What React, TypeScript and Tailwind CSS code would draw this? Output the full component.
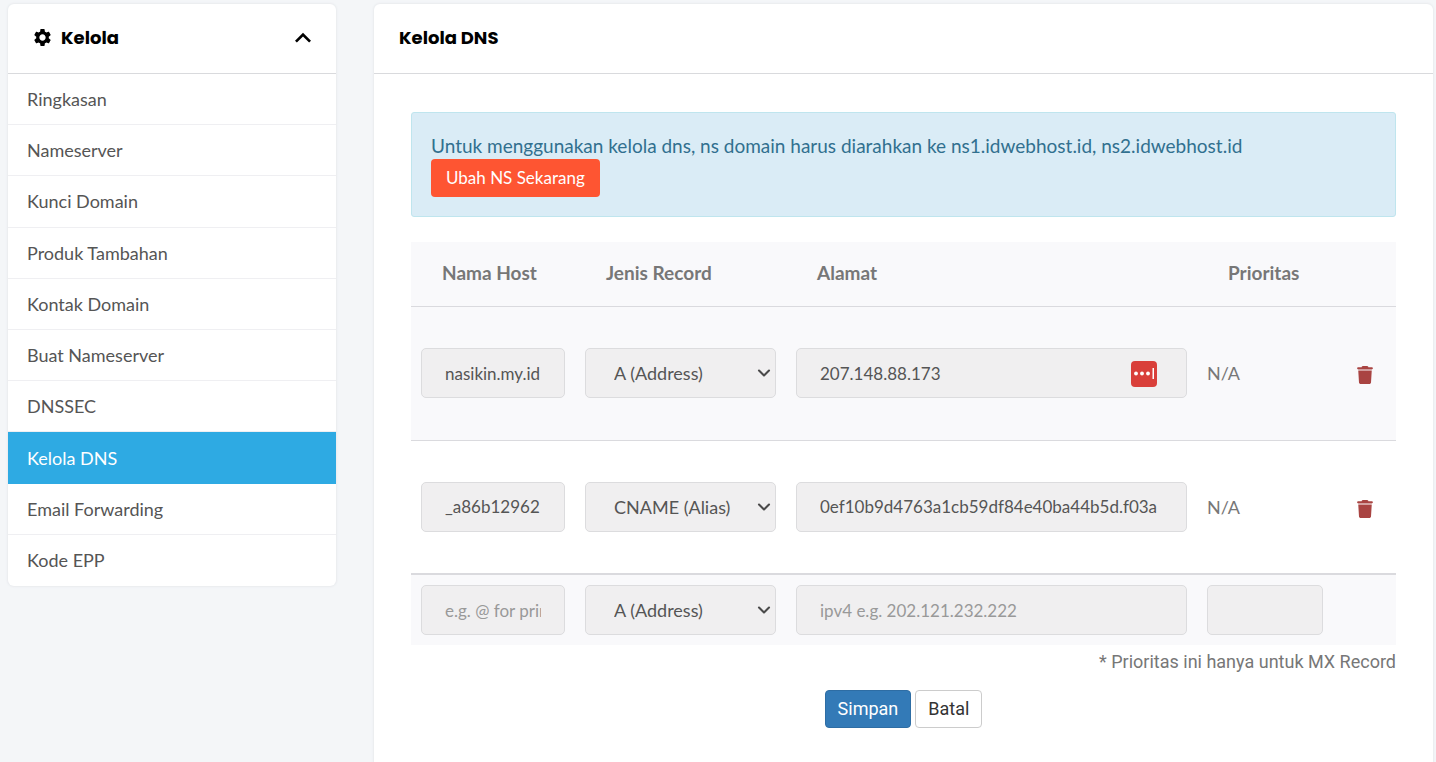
import { ChevronDown } from 'lucide-react';
import { FaTrash } from 'react-icons/fa6';
import { MdExpandLess, MdSettings } from 'react-icons/md';

type MenuItem = {
  label: string;
  active?: boolean;
};

type DnsRecord = {
  id: number;
  host: string;
  type: string;
  address: string;
  hasManager?: boolean;
};

const menuItems: MenuItem[] = [
  { label: 'Ringkasan' },
  { label: 'Nameserver' },
  { label: 'Kunci Domain' },
  { label: 'Produk Tambahan' },
  { label: 'Kontak Domain' },
  { label: 'Buat Nameserver' },
  { label: 'DNSSEC' },
  { label: 'Kelola DNS', active: true },
  { label: 'Email Forwarding' },
  { label: 'Kode EPP' },
];

const records: DnsRecord[] = [
  { id: 1, host: 'nasikin.my.id', type: 'A', address: '207.148.88.173', hasManager: true },
  {
    id: 2,
    host: '_a86b12962',
    type: 'CNAME',
    address: '0ef10b9d4763a1cb59df84e40ba44b5d.f03a',
  },
];

const fieldClass =
  'block h-[50px] w-full rounded-[5px] border border-[#dcdcde] bg-[#f0eff0] text-[#555] placeholder:text-[#999]';

const inputClass = `${fieldClass} px-[23px] text-[17px]`;

function Sidebar() {
  return (
    <aside className="w-82 shrink-0 self-start overflow-hidden rounded-md bg-white shadow-[0_0_2px_1px_#e9ebee]">
      <button
        type="button"
        className="flex h-[70px] w-full items-center border-b border-[#d9dadd] px-6 pb-0.5 text-black"
      >
        <MdSettings className="size-[21px]" />
        <span className="ml-2 font-['Poppins','Inter',sans-serif] text-lg font-bold">Kelola</span>
        <MdExpandLess className="ml-auto -mr-[7px] size-8" />
      </button>
      <nav className="grid h-128 auto-rows-fr">
        {menuItems.map((item) => (
          <a
            key={item.label}
            href="#"
            className={
              item.active
                ? 'flex items-center bg-[#2eaae3] px-[19px] text-lg text-white'
                : 'flex items-center border-b border-[#efeff2] px-[19px] text-lg text-[#555] last:border-b-0'
            }
          >
            {item.label}
          </a>
        ))}
      </nav>
    </aside>
  );
}

function TypeSelect({ id, value }: { id: string; value: string }) {
  return (
    <div className="relative">
      <select
        id={id}
        aria-label="Jenis Record"
        defaultValue={value}
        className={`${fieldClass} appearance-none pr-6 pl-7 text-lg`}
      >
        <option value="A">A (Address)</option>
        <option value="CNAME">CNAME (Alias)</option>
      </select>
      <ChevronDown
        strokeWidth={2.5}
        className="pointer-events-none absolute inset-y-0 right-0.5 my-auto size-5 text-[#4a4a4a]"
      />
    </div>
  );
}

function ManagerBadge() {
  return (
    <svg viewBox="0 0 26 26" className="absolute top-[13px] right-[30px] size-[26px]" aria-hidden="true">
      <rect width="26" height="26" rx="4" fill="#d93f3a" />
      <circle cx="5" cy="12.5" r="1.9" fill="#fff" />
      <circle cx="11" cy="12.5" r="1.9" fill="#fff" />
      <circle cx="17" cy="12.5" r="1.9" fill="#fff" />
      <rect x="21.5" y="7" width="1.5" height="11" fill="#fff" />
    </svg>
  );
}

function RecordRow({ record }: { record: DnsRecord }) {
  return (
    <tr className="h-[134px] border-t border-[#dadade] odd:bg-[#f9f9fb]">
      <td className="px-2.5">
        <input
          aria-label="Nama Host"
          id={`host-${record.id}`}
          defaultValue={record.host}
          className={inputClass}
        />
      </td>
      <td className="px-2.5">
        <TypeSelect id={`type-${record.id}`} value={record.type} />
      </td>
      <td className="px-2.5">
        <div className="relative">
          <input
            aria-label="Alamat"
            id={`address-${record.id}`}
            defaultValue={record.address}
            className={inputClass}
          />
          {record.hasManager && <ManagerBadge />}
        </div>
      </td>
      <td className="px-2.5 text-lg text-[#777]">N/A</td>
      <td className="text-center">
        <button type="button" aria-label="Hapus" className="align-middle text-[#a94442]">
          <FaTrash className="size-[18px]" />
        </button>
      </td>
    </tr>
  );
}

function DnsTable() {
  return (
    <table className="mt-[25px] w-full table-fixed border-collapse">
      <colgroup>
        <col className="w-[164px]" />
        <col className="w-[211px]" />
        <col />
        <col className="w-[136px]" />
        <col className="w-[63px]" />
      </colgroup>
      <thead>
        <tr className="h-16 bg-[#f9f9fb] text-left text-[19px] text-[#777]">
          <th className="pb-0.5 pl-[31px] font-bold">Nama Host</th>
          <th className="pb-0.5 pl-[31px] font-bold">Jenis Record</th>
          <th className="pb-0.5 pl-[31px] font-bold">Alamat</th>
          <th className="pb-0.5 pl-[31px] font-bold">Prioritas</th>
          <td />
        </tr>
      </thead>
      <tbody>
        {records.map((record) => (
          <RecordRow key={record.id} record={record} />
        ))}
      </tbody>
      <tbody>
        <tr className="h-[71px] border-t-2 border-[#dadade] bg-[#f9f9fb]">
          <td className="px-2.5">
            <input
              aria-label="Nama Host"
              id="host-new"
              placeholder="e.g. @ for primary"
              className={inputClass}
            />
          </td>
          <td className="px-2.5">
            <TypeSelect id="type-new" value="A" />
          </td>
          <td className="px-2.5">
            <input
              aria-label="Alamat"
              id="address-new"
              placeholder="ipv4 e.g. 202.121.232.222"
              className={inputClass}
            />
          </td>
          <td className="px-2.5">
            <input aria-label="Prioritas" id="priority-new" className={inputClass} />
          </td>
          <td />
        </tr>
      </tbody>
    </table>
  );
}

export default function App() {
  return (
    <div className="flex min-h-screen gap-[38px] bg-[#f4f6f8] pt-1 pr-[3px] pl-2 font-['Lato',sans-serif]">
      <Sidebar />
      <main className="min-w-0 flex-1 rounded-t-md bg-white shadow-[0_0_2px_1px_#e9ebee]">
        <h1 className="flex h-[70px] items-center border-b border-[#d9dadd] px-[25px] pb-0.5 font-['Poppins','Inter',sans-serif] text-lg font-bold text-black">
          Kelola DNS
        </h1>
        <div className="px-[37px] pt-[38px] pb-8">
          <div className="rounded-[3px] border border-[#bfe5ee] bg-[#daecf6] px-[19px] pt-5 pb-[19px] text-[19px] leading-[26px] text-[#31708f]">
            <p>
              Untuk menggunakan kelola dns, ns domain harus diarahkan ke ns1.idwebhost.id,
              ns2.idwebhost.id
            </p>
            <button
              type="button"
              className="block h-[38px] rounded-[4px] bg-[#fe5532] px-[15px] text-[17px] text-white"
            >
              Ubah NS Sekarang
            </button>
          </div>
          <DnsTable />
          <p className="mt-[3px] text-right font-['Roboto',sans-serif] text-lg leading-7 text-[#777]">
            * Prioritas ini hanya untuk MX Record
          </p>
          <div className="mt-3.5 flex justify-center gap-1 font-['Roboto',sans-serif] text-lg">
            <button
              type="submit"
              className="h-[38px] rounded-[4px] border border-[#2e6da4] bg-[#337ab7] px-3 text-white"
            >
              Simpan
            </button>
            <button
              type="reset"
              className="h-[38px] rounded-[4px] border border-[#ccc] bg-white px-3 text-[#333]"
            >
              Batal
            </button>
          </div>
        </div>
      </main>
    </div>
  );
}
